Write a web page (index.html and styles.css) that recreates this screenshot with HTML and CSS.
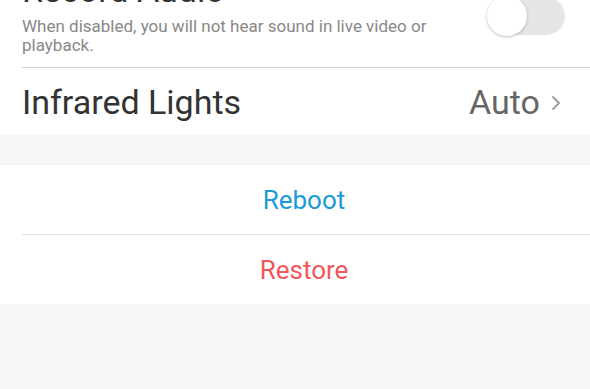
FILE: index.html
```html
<!DOCTYPE html>
<html lang="en">
<head>
    <meta charset="UTF-8">
    <title>Camera Settings</title>
    <link rel="stylesheet" href="styles.css">
</head>
<body>
    <div class="page">
        <div class="group">
            <div class="row switch-row">
                <div class="row-text">
                    <div class="row-title">Record Audio</div>
                    <div class="row-desc">When disabled, you will not hear sound in live video or playback.</div>
                </div>
                <div class="toggle"><span class="knob"></span></div>
            </div>
            <div class="row link-row">
                <div class="row-title">Infrared Lights</div>
                <div class="row-value">
                    Auto
                    <svg class="chevron" width="10" height="16" viewBox="0 0 10 16">
                        <path d="M2 2 L8 8 L2 14" fill="none" stroke="#9a9a9a" stroke-width="1.8" stroke-linecap="round" stroke-linejoin="round"/>
                    </svg>
                </div>
            </div>
        </div>

        <div class="group actions">
            <div class="action reboot"><span>Reboot</span></div>
            <div class="action restore"><span>Restore</span></div>
        </div>
    </div>
</body>
</html>
```

FILE: styles.css
```css
body {
    margin: 0;
    background-color: #f5f6f8;
    font-family: Roboto, "Noto Sans", sans-serif;
    color: #333;
}
.page {
    margin-top: -43px;
}
.group {
    background: white;
}
.row {
    display: flex;
    align-items: center;
    justify-content: space-between;
    margin-left: 22px;
    padding-right: 25px;
}
.switch-row {
    padding-top: 14px;
    padding-bottom: 12px;
    border-bottom: 1px solid #cfcfcf;
}
.row-title {
    font-size: 34px;
    line-height: 38px;
    color: #333;
}
.row-desc {
    margin-top: 8px;
    font-size: 17px;
    line-height: 19px;
    color: #888;
    max-width: 430px;
}
.toggle {
    flex-shrink: 0;
    width: 78px;
    height: 38px;
    border-radius: 19px;
    background-color: #e6e6e6;
    position: relative;
    margin-top: 6px;
}
.knob {
    position: absolute;
    left: 0;
    top: -1px;
    width: 40px;
    height: 40px;
    border-radius: 50%;
    background: white;
    box-shadow: 0 1px 3px rgba(0, 0, 0, 0.25);
}
.link-row {
    height: 67px;
    padding-right: 29px;
}
.row-value {
    display: flex;
    align-items: center;
    gap: 11px;
    font-size: 34px;
    color: #666;
}
.chevron {
    margin-top: 2px;
}
.actions {
    margin-top: 30px;
    box-shadow: 0 1px 2px rgba(0, 0, 0, 0.12);
}
.action {
    height: 69px;
    display: flex;
    align-items: center;
    justify-content: center;
    font-size: 26px;
    padding-left: 18px;
}
.reboot {
    color: #1a9ad6;
    border-bottom: 1px solid #e2e2e2;
    margin-left: 22px;
    padding-left: 0;
    padding-right: 4px;
}
.restore {
    color: #f0575c;
}
```
